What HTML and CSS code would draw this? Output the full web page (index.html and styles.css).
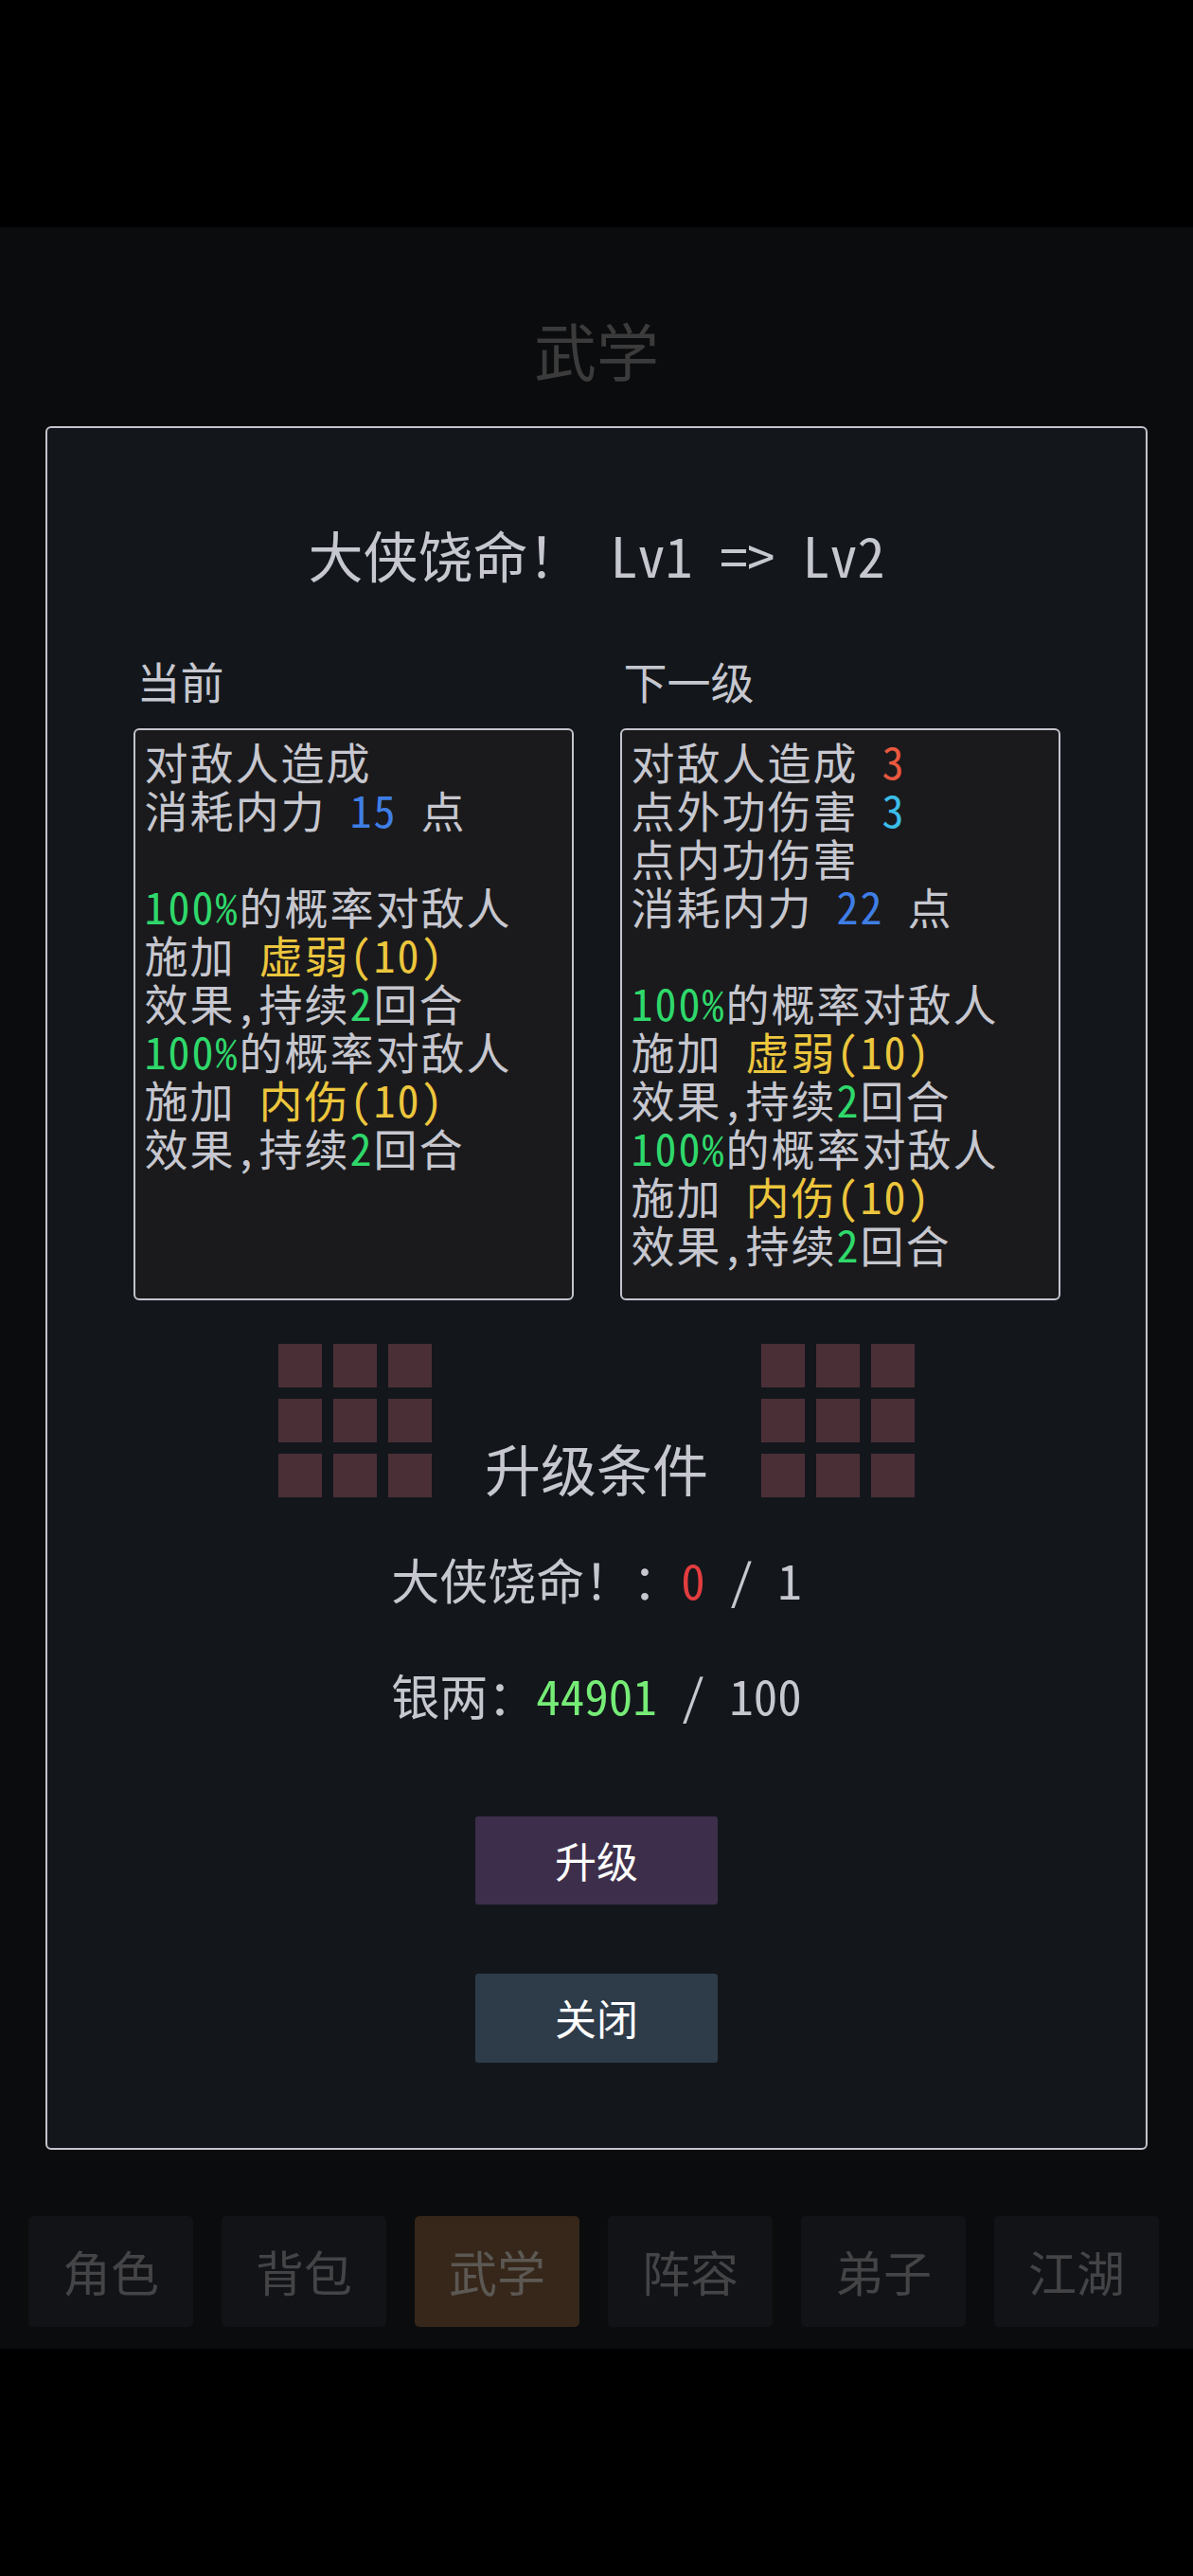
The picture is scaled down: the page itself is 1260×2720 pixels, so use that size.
FILE: index.html
```html
<!DOCTYPE html>
<html lang="zh-CN">
<head>
	<meta charset="UTF-8">
	<title>武学</title>
	<link rel="stylesheet" href="styles.css">
</head>
<body>
	<div class="app">
		<h1 class="page-title">武学</h1>

		<!-- 升级弹窗 -->
		<div class="dialog">
			<h2 class="dialog-title">大侠饶命！ Lv1 =&gt; Lv2</h2>

			<div class="compare">
				<div class="compare-col">
					<div class="compare-label">当前</div>
					<div class="desc-box">
						<p class="line">对敌人造成</p>
						<p class="line">消耗内力 <span class="c-blue">15</span> 点</p>
						<p class="line"></p>
						<p class="line"><span class="c-green">100%</span>的概率对敌人</p>
						<p class="line">施加 <span class="c-yellow">虚弱(10)</span></p>
						<p class="line">效果,持续<span class="c-green">2</span>回合</p>
						<p class="line"><span class="c-green">100%</span>的概率对敌人</p>
						<p class="line">施加 <span class="c-yellow">内伤(10)</span></p>
						<p class="line">效果,持续<span class="c-green">2</span>回合</p>
					</div>
				</div>
				<div class="compare-col">
					<div class="compare-label">下一级</div>
					<div class="desc-box">
						<p class="line">对敌人造成 <span class="c-red">3</span></p>
						<p class="line">点外功伤害 <span class="c-cyan">3</span></p>
						<p class="line">点内功伤害</p>
						<p class="line">消耗内力 <span class="c-blue">22</span> 点</p>
						<p class="line"></p>
						<p class="line"><span class="c-green">100%</span>的概率对敌人</p>
						<p class="line">施加 <span class="c-yellow">虚弱(10)</span></p>
						<p class="line">效果,持续<span class="c-green">2</span>回合</p>
						<p class="line"><span class="c-green">100%</span>的概率对敌人</p>
						<p class="line">施加 <span class="c-yellow">内伤(10)</span></p>
						<p class="line">效果,持续<span class="c-green">2</span>回合</p>
					</div>
				</div>
			</div>

			<!-- 条件标题，两边是九宫格装饰 -->
			<div class="cond-head">
				<div class="deco-grid">
					<i></i><i></i><i></i><i></i><i></i><i></i><i></i><i></i><i></i>
				</div>
				<div class="cond-title">升级条件</div>
				<div class="deco-grid">
					<i></i><i></i><i></i><i></i><i></i><i></i><i></i><i></i><i></i>
				</div>
			</div>

			<div class="cond-list">
				<p class="cond">大侠饶命！：<span class="c-bad">0</span> / 1</p>
				<p class="cond">银两：<span class="c-ok">44901</span> / 100</p>
			</div>

			<div class="actions">
				<a class="btn btn-upgrade" href="javascript:">升级</a>
				<a class="btn btn-close" href="javascript:">关闭</a>
			</div>
		</div>

		<!-- 底部导航 -->
		<ul class="tabbar">
			<li>角色</li>
			<li>背包</li>
			<li class="active">武学</li>
			<li>阵容</li>
			<li>弟子</li>
			<li>江湖</li>
		</ul>
	</div>
</body>
</html>
```

FILE: styles.css
```css
html, body {
	margin: 0;
	padding: 0;
	background-color: #000;
}
body {
	font-family: "Noto Sans Mono CJK SC", "Noto Sans CJK SC", monospace;
	color: #c6c7cf;
}
p, h1, h2, ul {
	margin: 0;
	padding: 0;
}
ul {
	list-style-type: none;
}

.app {
	margin-top: 240px;
	width: 1260px;
	height: 2240px;
	background-color: #0b0c0d;
	display: flex;
	flex-direction: column;
	align-items: center;
}

.page-title {
	padding-top: 95px;
	height: 115px;
	font-size: 66px;
	font-weight: normal;
	line-height: 66px;
	color: #3b3b3c;
}

/*弹窗*/
.dialog {
	box-sizing: border-box;
	width: 1164px;
	padding: 104px 0 90px;
	border: 2px solid #c3c4cc;
	border-radius: 6px;
	background-color: #13171c;
	display: flex;
	flex-direction: column;
	align-items: center;
}
.dialog-title {
	font-size: 58px;
	font-weight: normal;
	line-height: 58px;
	white-space: pre;
}

.compare {
	margin-top: 81px;
	display: flex;
	gap: 49px;
}
.compare-col {
	width: 465px;
}
.compare-label {
	padding-left: 4px;
	font-size: 46px;
	line-height: 46px;
}
.desc-box {
	box-sizing: border-box;
	margin-top: 28px;
	height: 604px;
	padding: 7px 10px;
	border: 2px solid #c3c4cc;
	border-radius: 6px;
	background-color: #1a1a1c;
}
.desc-box .line {
	height: 51px;
	font-size: 46px;
	letter-spacing: 2px;
	line-height: 51px;
	white-space: pre;
}

/*文字颜色*/
.c-blue { color: #3f7ee6; }
.c-red { color: #e9583f; }
.c-cyan { color: #3bbde8; }
.c-green { color: #2fd86b; }
.c-yellow { color: #ecc63d; }
.c-bad { color: #e33d3f; }
.c-ok { color: #76ec76; }

/*升级条件*/
.cond-head {
	margin-top: 46px;
	display: flex;
	align-items: flex-end;
	gap: 56px;
}
.deco-grid {
	display: grid;
	grid-template-columns: repeat(3, 46px);
	grid-auto-rows: 46px;
	gap: 12px;
}
.deco-grid i {
	background-color: #4a2f36;
}
.cond-title {
	font-size: 59px;
	line-height: 59px;
	margin-bottom: 2px;
}

.cond-list {
	margin-top: 61px;
	display: flex;
	flex-direction: column;
	align-items: center;
	gap: 71px;
}
.cond {
	font-size: 51px;
	line-height: 51px;
	white-space: pre;
}

.actions {
	margin-top: 103px;
	display: flex;
	flex-direction: column;
	gap: 73px;
}
.btn {
	display: block;
	width: 256px;
	height: 93px;
	border-radius: 3px;
	font-size: 44px;
	line-height: 93px;
	text-align: center;
	color: #fff;
	text-decoration: none;
	outline: none;
}
.btn-upgrade {
	background-color: #3d2f4b;
}
.btn-close {
	height: 94px;
	background-color: #2e3b48;
}

/*底部导航*/
.tabbar {
	box-sizing: border-box;
	margin-top: 70px;
	width: 1260px;
	padding: 0 36px 0 30px;
	display: grid;
	grid-template-columns: repeat(6, 1fr);
	gap: 30px;
}
.tabbar li {
	height: 117px;
	border-radius: 5px;
	background-color: #111317;
	font-size: 51px;
	line-height: 117px;
	text-align: center;
	color: #444446;
}
.tabbar li.active {
	background-color: #36271a;
	color: #5c5853;
}
```
